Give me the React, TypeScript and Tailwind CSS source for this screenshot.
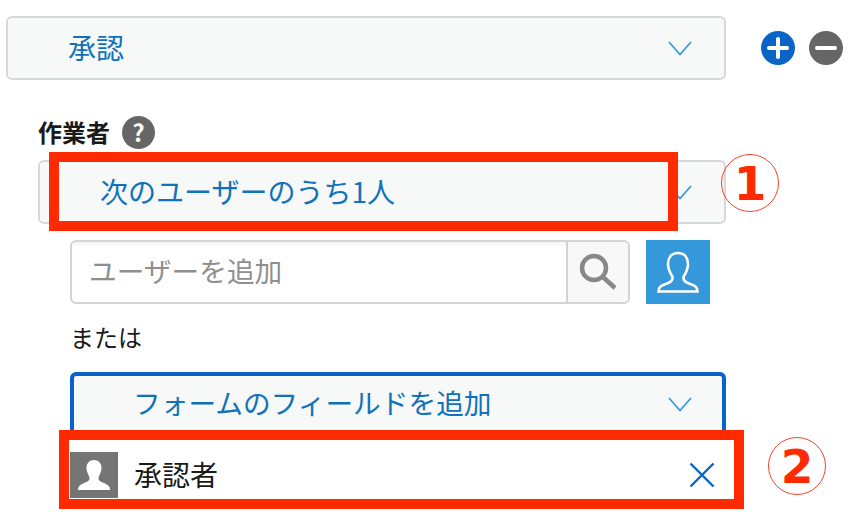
import React from "react";

const Chevron = () => (
  <svg width="24" height="15" viewBox="0 0 24 15" fill="none" className="shrink-0">
    <path d="M1 1 L12 13.500 L23 1" stroke="#3498db" strokeWidth="1.7" />
  </svg>
);

const Select = ({ label, className, textClass }: { label: string; className: string; textClass: string }) => (
  <div className={"h-16 rounded-md bg-[#f7f8f8] flex items-center justify-between " + className}>
    <span className={"leading-none text-[#1072b8] whitespace-nowrap -mt-[2px] " + textClass}>{label}</span>
    <Chevron />
  </div>
);

const Marker = ({ n, className }: { n: string; className: string }) => (
  <span
    className={
      "absolute w-[58px] h-[58px] rounded-full border-[1.5px] border-[#f2452a] flex items-center justify-center text-[47px] font-bold leading-none text-[#ff2a00] " +
      className
    }
    style={{ fontFamily: '"DejaVu Sans", sans-serif' }}
  >
    {n}
  </span>
);

const App = () => {
  return (
    <div
      className="relative w-[868px] h-[518px] overflow-hidden bg-white pt-4 text-[#1a1a1a]"
      style={{ fontFamily: '"Noto Sans CJK JP", sans-serif' }}
    >
      <div className="flex items-center ml-[6px]">
        <Select label="承認" className="w-[720px] border-2 border-[#d8d8d8] pr-[32px]" textClass="pl-[60px] text-[28px]" />
        <div className="flex items-center gap-[14px] ml-[35px]">
          <svg width="34" height="34" viewBox="0 0 34 34">
            <circle cx="17" cy="17" r="17" fill="#0a64c8" />
            <path d="M17 8 V26 M8 17 H26" stroke="#fff" strokeWidth="4" strokeLinecap="round" />
          </svg>
          <svg width="34" height="34" viewBox="0 0 34 34">
            <circle cx="17" cy="17" r="17" fill="#666" />
            <path d="M8 17 H26" stroke="#fff" strokeWidth="4" strokeLinecap="round" />
          </svg>
        </div>
      </div>

      <div className="ml-[38px] mt-[35px] flex items-center h-[34px]">
        <span className="text-[24px] font-bold leading-none">作業者</span>
        <span className="ml-[12px] w-[33px] h-[33px] rounded-full bg-[#666] text-white text-[24px] font-bold flex items-center justify-center leading-none">
          ?
        </span>
      </div>

      <Select label="次のユーザーのうち1人" className="ml-[38px] mt-[11px] w-[688px] border-2 border-[#d8d8d8] pr-[32px]" textClass="pl-[60px] text-[28px]" />

      <div className="ml-[70px] mt-4 flex items-stretch h-16">
        <div className="w-[560px] flex rounded-md border-2 border-[#d4d4d4] bg-white shadow-[inset_0_3px_3px_rgba(0,0,0,0.04)]">
          <span className="flex-1 flex items-center pl-[17px] pb-[3px] text-[27.7px] text-[#8f8f8f] leading-none">ユーザーを追加</span>
          <div className="w-[62px] flex items-center justify-center border-l-2 border-[#d4d4d4] bg-[#f8f8f8] rounded-r-md">
            <svg width="40" height="40" viewBox="0 0 40 40" fill="none">
              <circle cx="16" cy="16" r="12" stroke="#888" strokeWidth="4.5" />
              <path d="M25 25 L37 36" stroke="#888" strokeWidth="4.5" />
            </svg>
          </div>
        </div>
        <div className="ml-4 w-16 bg-[#3498db] flex items-center justify-center">
          <svg width="44" height="44" viewBox="0 0 44 44" fill="none">
            <path
              d="M22 3 C15 3 12 8 12 14 C12 20 15 24 16.500 27 C17 30 15 32 11 33.500 C5 35.500 2.500 37 2.500 41.500 H41.500 C41.500 37 39 35.500 33 33.500 C29 32 27 30 27.500 27 C29 24 32 20 32 14 C32 8 29 3 22 3 Z"
              stroke="#fff"
              strokeWidth="2.6"
            />
          </svg>
        </div>
      </div>

      <div className="ml-[70px] mt-[17px] h-[34px] flex items-center text-[24px] leading-none -translate-y-px">または</div>

      <Select label="フォームのフィールドを追加" className="ml-[70px] mt-[17px] w-[656px] border-4 border-[#0a64c8] pr-[30px]" textClass="pl-[59px] text-[27.7px]" />

      <div className="ml-[70px] mt-4 w-[656px] h-[46px] flex items-center">
        <div className="w-12 h-[46px] bg-[#757575] flex items-start justify-center pt-2">
          <svg width="32" height="30" viewBox="0 0 32 30" fill="#fff">
            <path d="M16 0 C11 0 8 4 8.500 9 C9 13 11 15 11.500 18 C12 21 8 22 4 24 C1 25.500 0 27 0 30 H32 C32 27 31 25.500 28 24 C24 22 20 21 20.500 18 C21 15 23 13 23.500 9 C24 4 21 0 16 0 Z" />
          </svg>
        </div>
        <span className="ml-4 text-[28px] leading-none -mt-[3px]">承認者</span>
        <svg width="26" height="26" viewBox="0 0 26 26" fill="none" className="ml-auto mr-[11px]">
          <path d="M1.500 1.500 L24.500 24.500 M24.500 1.500 L1.500 24.500" stroke="#0a64c8" strokeWidth="2.4" />
        </svg>
      </div>

      {/* annotations drawn over the form */}
      <div className="absolute left-[49px] top-[152px] w-[629px] h-[79px] border-[10px] border-[#ff2a00]" />
      <div className="absolute left-[59px] top-[430px] w-[685px] h-[79px] border-[10px] border-[#ff2a00] pointer-events-none" />
      <Marker n="1" className="left-[721px] top-[154px]" />
      <Marker n="2" className="left-[768px] top-[437px]" />
    </div>
  );
};

export default App;
